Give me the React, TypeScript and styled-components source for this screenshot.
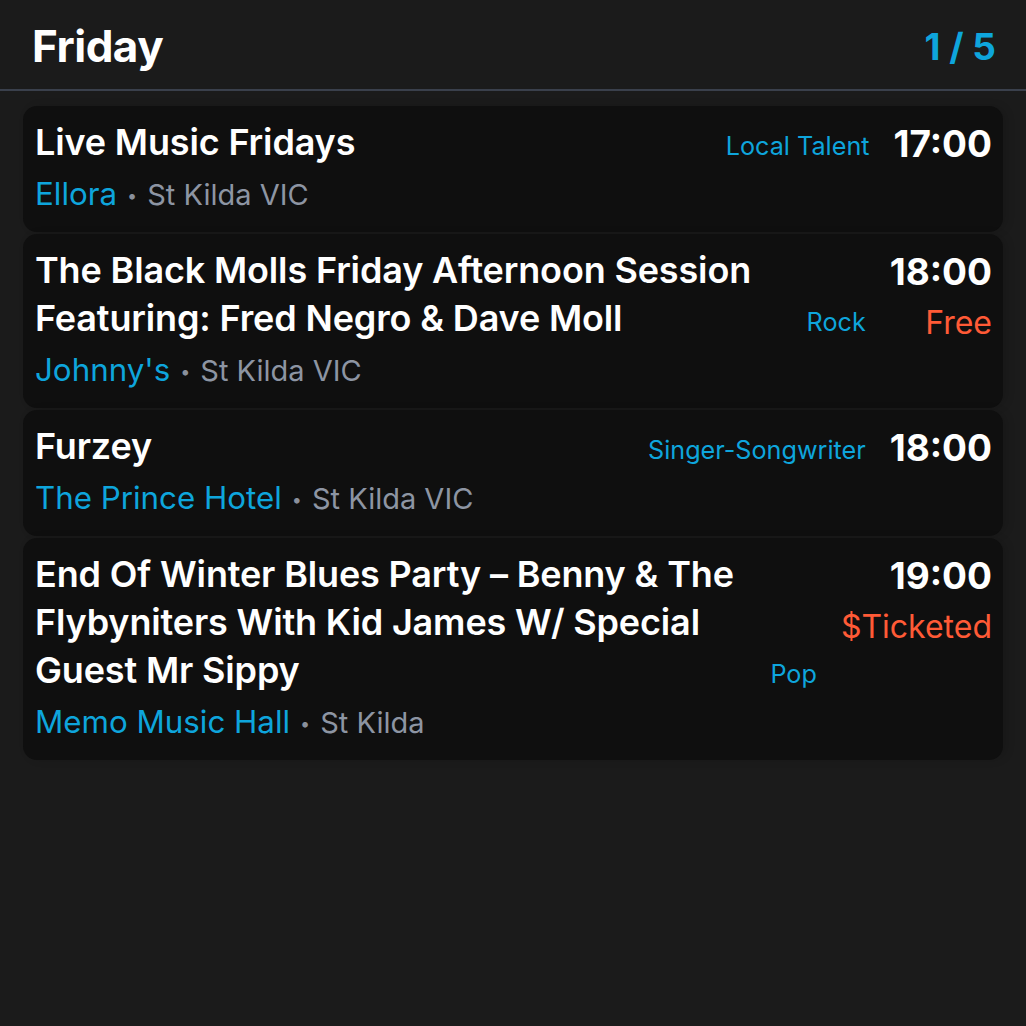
import styled, { createGlobalStyle } from "styled-components";

type Gig = {
  title: string;
  venue: string;
  place: string;
  tag: string;
  time: string;
  price?: string;
};

const gigs: Gig[] = [
  { title: "Live Music Fridays", venue: "Ellora", place: "St Kilda VIC", tag: "Local Talent", time: "17:00" },
  {
    title: "The Black Molls Friday Afternoon Session Featuring: Fred Negro & Dave Moll",
    venue: "Johnny's",
    place: "St Kilda VIC",
    tag: "Rock",
    time: "18:00",
    price: "Free",
  },
  { title: "Furzey", venue: "The Prince Hotel", place: "St Kilda VIC", tag: "Singer-Songwriter", time: "18:00" },
  {
    title: "End Of Winter Blues Party – Benny & The Flybyniters With Kid James W/ Special Guest Mr Sippy",
    venue: "Memo Music Hall",
    place: "St Kilda",
    tag: "Pop",
    time: "19:00",
    price: "$Ticketed",
  },
];

const App = () => {
  return (
    <Page>
      <GlobalStyle />
      <Header>
        <Day>Friday</Day>
        <Counter>1 / 5</Counter>
      </Header>
      <List>
        {gigs.map((g) => (
          <Card key={g.title}>
            <Info>
              <TopRow>
                <Title>{g.title}</Title>
                <Tag>{g.tag}</Tag>
              </TopRow>
              <Where>
                <Venue>{g.venue}</Venue>
                <Dot>•</Dot>
                <Place>{g.place}</Place>
              </Where>
            </Info>
            <Side>
              <Time>{g.time}</Time>
              {g.price && <Price>{g.price}</Price>}
            </Side>
          </Card>
        ))}
      </List>
    </Page>
  );
};

export default App;

const GlobalStyle = createGlobalStyle`
  html, body {
    margin: 0;
    padding: 0;
    background: #1b1b1b;
  }
  body {
    font-family: Inter, "Noto Sans", sans-serif;
    -webkit-font-smoothing: antialiased;
  }
`;

const Page = styled.div`
  width: 1026px;
  height: 1026px;
  background: #1b1b1b;
  color: #ffffff;
  overflow: hidden;
`;

const Header = styled.div`
  height: 91px;
  box-sizing: border-box;
  padding: 3px 30px 0 32px;
  display: flex;
  justify-content: space-between;
  align-items: center;
  border-bottom: 2px solid #3a404c;
`;

const Day = styled.div`
  font-size: 44px;
  font-weight: 700;
  letter-spacing: -0.5px;
`;

const Counter = styled.div`
  font-size: 37px;
  font-weight: 700;
  color: #0ea5dc;
`;

const List = styled.div`
  padding: 15px 23px;
  display: flex;
  flex-direction: column;
  gap: 2px;
`;

const Card = styled.div`
  background: #0f0f0f;
  border-radius: 14px;
  padding: 12px 11px 16px 12px;
  display: flex;
  align-items: flex-start;
  gap: 24px;
  box-shadow: 4px 0 8px rgba(0, 0, 0, 0.12);
`;

const Info = styled.div`
  flex: 1;
  min-width: 0;
`;

const TopRow = styled.div`
  display: flex;
  align-items: flex-end;
  gap: 24px;
`;

const Title = styled.div`
  flex: 1;
  font-size: 36px;
  line-height: 48px;
  font-weight: 600;
  letter-spacing: -0.15px;
`;

const Tag = styled.div`
  font-size: 25.2px;
  line-height: 40px;
  color: #0ea5dc;
  white-space: nowrap;
`;

const Where = styled.div`
  margin-top: 6px;
  height: 44px;
  display: flex;
  align-items: baseline;
  line-height: 44px;
  overflow: hidden;
`;

const Venue = styled.span`
  font-size: 31.3px;
  color: #0ea5dc;
`;

const Dot = styled.span`
  color: #8a909c;
  font-size: 18px;
  margin: 0 10px;
  position: relative;
  top: -3px;
`;

const Place = styled.span`
  font-size: 29px;
  color: #8d95a3;
`;

const Side = styled.div`
  display: flex;
  flex-direction: column;
  align-items: flex-end;
`;

const Time = styled.div`
  font-size: 37px;
  line-height: 52px;
  font-weight: 700;
`;

const Price = styled.div`
  font-size: 32px;
  line-height: 50px;
  color: #ff5a36;
`;
